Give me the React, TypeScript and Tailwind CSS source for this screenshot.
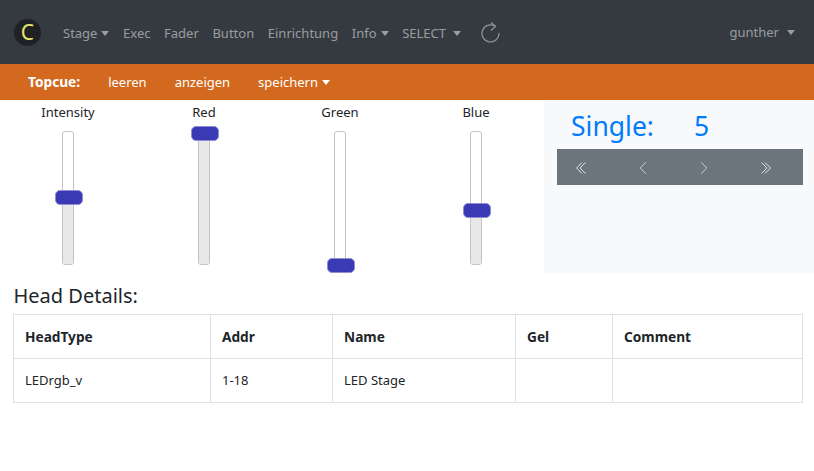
import { ChevronLeft, ChevronRight } from "lucide-react";

const navItems = [
  { label: "Stage", caret: true },
  { label: "Exec" },
  { label: "Fader" },
  { label: "Button" },
  { label: "Einrichtung" },
  { label: "Info", caret: true },
];

const sliders = [
  { label: "Intensity", top: 58 },
  { label: "Red", top: -6 },
  { label: "Green", top: 126 },
  { label: "Blue", top: 71 },
];

const Caret = () => (
  <span className="ml-[4px] inline-block border-x-[4.5px] border-t-[5px] border-x-transparent border-t-current align-[2px]" />
);

const Slider = ({ label, top }: { label: string; top: number }) => (
  <div className="flex w-[136px] flex-col items-center">
    <div className="mt-[2px] h-[29px] text-[13px] leading-[20px] text-[#212529]">{label}</div>
    <div className="relative h-[134px] w-[12px] overflow-visible rounded-[3px] border border-[#c4c4c4] bg-white">
      <div className="absolute inset-x-0 bottom-0 rounded-b-[2px] bg-[#e8e8e8]" style={{ top: top + 7 }} />
      <div
        className="absolute left-[-8px] h-[15px] w-[28px] rounded-[5px] border border-[#8f8fcf] bg-[#3a3ab4]"
        style={{ top }}
      />
    </div>
  </div>
);

export default function App() {
  return (
    <div className="min-h-[471px] bg-white font-['Noto_Sans','Open_Sans',sans-serif] text-[13px] text-[#212529]">
      <nav className="flex h-16 items-center bg-[#343a40] pl-[14px] pr-[19px] text-[rgba(255,255,255,0.5)]">
        <div className="mr-[22px] flex h-[27px] w-[27px] items-center justify-center rounded-full bg-[#202124] text-[21px] leading-none text-[#e6e66a]">
          C
        </div>
        <ul className="flex items-center gap-[13.6px] pt-[2px]">
          {navItems.map((item) => (
            <li key={item.label} className="leading-[21px]">
              {item.label}
              {item.caret && <Caret />}
            </li>
          ))}
          <li className="leading-[21px]">
            SELECT
            <span className="ml-[7px] inline-block border-x-[4.5px] border-t-[5px] border-x-transparent border-t-current align-[2px]" />
          </li>
        </ul>
        <svg className="ml-[20px] h-[21px] w-[20px]" viewBox="0 0 20 21" fill="none" stroke="#8f9295" strokeWidth="1.3">
          <path d="M14 4.2A8.5 8.5 0 1 0 18 11" />
          <path d="M10 0.5 14.5 4.2 10 8.5" />
        </svg>
        <div className="ml-auto pt-px leading-[21px]">
          gunther
          <span className="ml-[8px] inline-block border-x-[4.5px] border-t-[5px] border-x-transparent border-t-current align-[2px]" />
        </div>
      </nav>

      <div className="flex h-9 items-center gap-[28px] bg-[#d2691e] pl-[28px] pt-px text-[13px] text-white">
        <b className="text-[13.7px] font-bold">Topcue:</b>
        <span>leeren</span>
        <span>anzeigen</span>
        <span>
          speichern
          <Caret />
        </span>
      </div>

      <div className="flex h-[173px]">
        <div className="flex w-[544px]">
          {sliders.map((s) => (
            <Slider key={s.label} label={s.label} top={s.top} />
          ))}
        </div>
        <div className="flex-1 bg-[#f8f9fa] pl-[13px] pr-[11px]">
          <div className="flex h-[49px] items-center pl-[14px] pt-[3px] text-[26.5px] leading-none text-[#007bff]">
            <span className="w-[123px]">Single:</span>
            <span>5</span>
          </div>
          <div className="grid h-9 grid-cols-[repeat(4,61.5px)] items-center bg-[#6c757d] pt-px text-[#e3e5e7]">
            <svg className="ml-[13px] h-[22px] w-[22px]" viewBox="0 0 22 22" fill="none" stroke="currentColor" strokeWidth="1">
              <path d="M12 5.5 6.5 11 12 16.5" />
              <path d="M15.5 5.5 10 11 15.5 16.5" />
            </svg>
            <ChevronLeft className="ml-[13px] h-[22px] w-[22px]" strokeWidth={0.9} />
            <ChevronRight className="ml-[13px] h-[22px] w-[22px]" strokeWidth={0.9} />
            <svg className="ml-[13px] h-[22px] w-[22px]" viewBox="0 0 22 22" fill="none" stroke="currentColor" strokeWidth="1">
              <path d="M6.5 5.5 12 11 6.5 16.5" />
              <path d="M10 5.5 15.5 11 10 16.5" />
            </svg>
          </div>
        </div>
      </div>

      <div className="pl-[13px] pr-[11px]">
        <h2 className="ml-[0.5px] h-[41px] pt-[8px] text-[20px] leading-[30px] font-normal">Head Details:</h2>
        <table className="w-[790px] table-fixed border-collapse text-[13px]">
          <colgroup>
            <col className="w-[197px]" />
            <col className="w-[122px]" />
            <col className="w-[183px]" />
            <col className="w-[97px]" />
            <col />
          </colgroup>
          <thead>
            <tr className="h-[44px]">
              {["HeadType", "Addr", "Name", "Gel", "Comment"].map((h) => (
                <th key={h} className="border border-[#dee2e6] px-[11px] pt-px text-left text-[13.7px] font-bold">
                  {h}
                </th>
              ))}
            </tr>
          </thead>
          <tbody>
            <tr className="h-[44px]">
              {["LEDrgb_v", "1-18", "LED Stage", "", ""].map((c, i) => (
                <td key={i} className="border border-[#dee2e6] px-[11px]">
                  {c}
                </td>
              ))}
            </tr>
          </tbody>
        </table>
      </div>
    </div>
  );
}
